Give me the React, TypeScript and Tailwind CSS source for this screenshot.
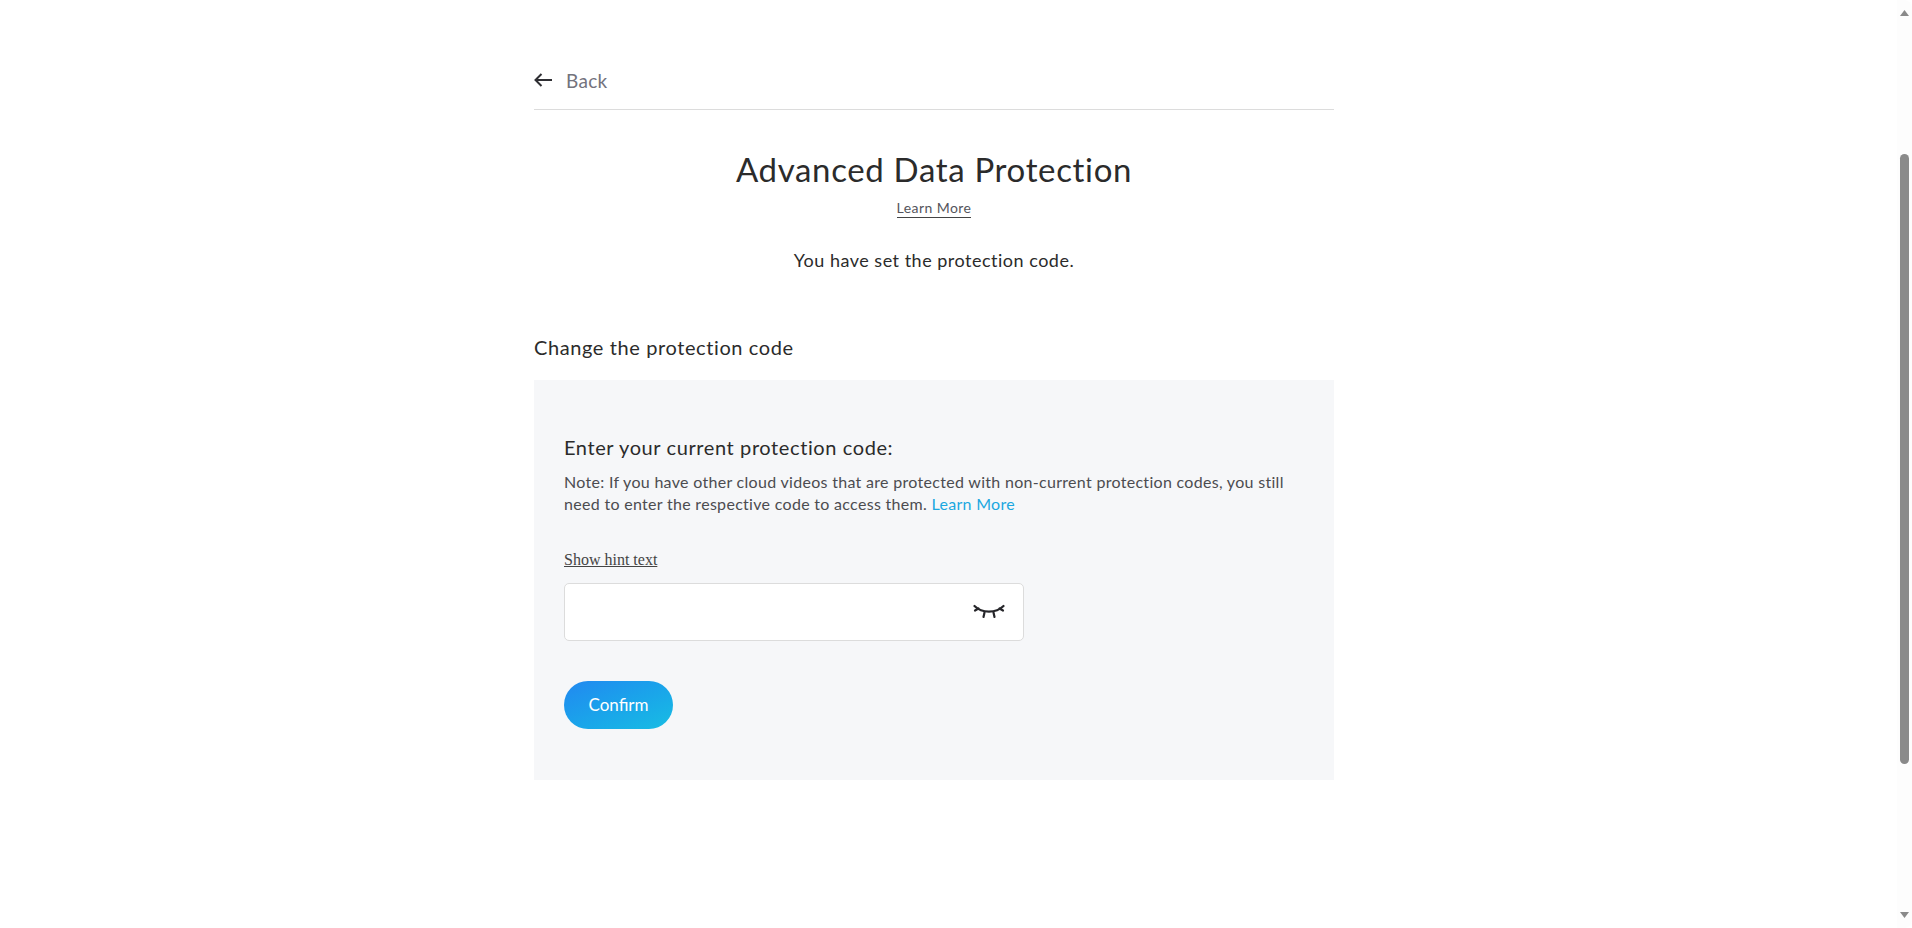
export default function App() {
  return (
    <div className="flex h-[928px] w-[1912px] overflow-hidden bg-white font-['Lato',sans-serif] text-[#2b2b2b]">
      <main className="w-[1897px] pl-[534px]">
        <div className="w-[800px]">
          <a className="flex h-[110px] items-start border-b border-[#dcdcdc] pt-[67px]">
            <svg width="19" height="14" viewBox="0 0 19 14" fill="none" stroke="#2f2f33" strokeWidth="2" className="mt-[6px]">
              <path d="M18 7H1.500M7.500 1L1.500 7l6 6" />
            </svg>
            <span className="ml-[13px] text-[19px] leading-[28px] tracking-[0.3px] text-[#73737d]">Back</span>
          </a>

          <div className="text-center">
            <h1 className="mt-[39px] text-[33px] leading-[40px] tracking-[0.66px]">Advanced Data Protection</h1>
            <a className="mt-[9px] inline-block border-b border-[#444] text-[14px] leading-[19px] tracking-[0.45px] text-[#55555c]">Learn More</a>
            <p className="mt-[28px] text-[18px] leading-[26px] tracking-[0.5px]">You have set the protection code.</p>
          </div>

          <h2 className="mt-[60px] text-[20px] leading-[28px] tracking-[0.6px]">Change the protection code</h2>

          <section className="mt-[19px] h-[400px] bg-[#f6f7f9] px-[30px] pt-[53px]">
            <h3 className="text-[20px] leading-[28px] tracking-[0.6px]">Enter your current protection code:</h3>
            <p className="mt-[10px] w-[740px] text-[16px] leading-[22px] tracking-[0.3px] text-[#4c4c50]">
              Note: If you have other cloud videos that are protected with non-current protection codes, you still need to enter the respective code to access them.{' '}
              <a className="text-[#1ba7e0]">Learn More</a>
            </p>
            <a className="mt-[36px] block w-fit font-['Liberation_Serif',serif] text-[16px] leading-[17px] text-[#444] underline">Show hint text</a>
            <div className="mt-[15px] flex h-[58px] w-[460px] items-center justify-end rounded-[5px] border border-[#dcdcdc] bg-white pr-[18px]">
              <svg width="32" height="16" viewBox="0 0 32 16" fill="none" stroke="#26262a" strokeWidth="2.200" strokeLinecap="round">
                <path d="M1.500 2C9 9.500 23 9.500 30.500 2" />
                <path d="M2 6.500l3.500-2M30 6.500l-3.500-2M10.500 13l1-4.500M21.500 13l-1-4.500" />
              </svg>
            </div>
            <button className="mt-[40px] h-[48px] w-[109px] rounded-full bg-gradient-to-br from-[#2288f0] to-[#19bde3] text-[17px] text-white">Confirm</button>
          </section>
        </div>
      </main>

      <div className="flex w-[15px] flex-col items-center rounded-tr-[8px] rounded-br-[8px] bg-[#fdfdfd]">
        <svg width="9" height="6" viewBox="0 0 9 6" fill="#8a8a8a" className="mt-[10px]"><path d="M4.500 0L9 6H0z" /></svg>
        <div className="mt-[138px] h-[610px] w-[9px] rounded-full bg-[#8a8a8a]" />
        <svg width="9" height="6" viewBox="0 0 9 6" fill="#8a8a8a" className="mt-[148px]"><path d="M0 0h9L4.500 6z" /></svg>
      </div>
    </div>
  )
}
